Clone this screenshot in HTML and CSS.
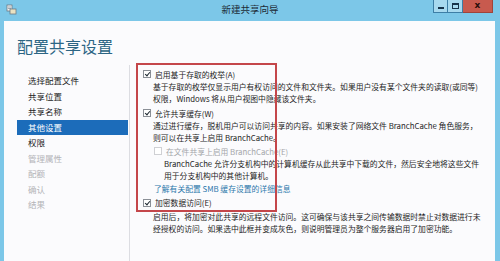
FILE: index.html
```html
<!DOCTYPE html>
<html lang="zh-CN">
<head>
<meta charset="utf-8">
<title>新建共享向导</title>
<link rel="stylesheet" href="styles.css">
</head>
<body>
<div class="window">
  <div class="titlebar">
    <div class="tb-left">
      <svg class="app-icon" width="11" height="11" viewBox="0 0 11 11">
        <rect x="1" y="1" width="5" height="6" fill="#f4f4f4" stroke="#6c7a86" stroke-width="0.8"/>
        <rect x="4" y="5" width="6" height="5" fill="#e9e2c2" stroke="#6c7a86" stroke-width="0.8"/>
        <path d="M2 3h3M2 4.5h3" stroke="#6c7a86" stroke-width="0.6"/>
      </svg>
    </div>
    <div class="title">新建共享向导</div>
    <div class="controls">
      <span class="btn min"><span class="glyph-min"></span></span>
      <span class="btn max"><span class="glyph-max"></span></span>
      <span class="btn close">x</span>
    </div>
  </div>
  <div class="client">
    <h1 class="heading">配置共享设置</h1>
    <div class="main">
      <ul class="nav">
        <li>选择配置文件</li>
        <li>共享位置</li>
        <li>共享名称</li>
        <li class="active">其他设置</li>
        <li>权限</li>
        <li class="disabled">管理属性</li>
        <li class="disabled">配额</li>
        <li class="disabled">确认</li>
        <li class="disabled">结果</li>
      </ul>
      <div class="panel">
        <div class="annot"></div>
        <div class="opt">
          <span class="cb checked"></span><span class="label">启用基于存取的枚举(A)</span>
        </div>
        <p class="desc">基于存取的枚举仅显示用户有权访问的文件和文件夹。如果用户没有某个文件夹的读取(或同等)<br>权限，Windows 将从用户视图中隐藏该文件夹。</p>
        <div class="opt sec">
          <span class="cb checked"></span><span class="label">允许共享缓存(W)</span>
        </div>
        <p class="desc">通过进行缓存，脱机用户可以访问共享的内容。如果安装了网络文件 BranchCache 角色服务，<br>则可以在共享上启用 BranchCache。</p>
        <div class="opt sub">
          <span class="cb dim"></span><span class="label dimtext">在文件共享上启用 BranchCache(E)</span>
        </div>
        <p class="desc subdesc">BranchCache 允许分支机构中的计算机缓存从此共享中下载的文件，然后安全地将这些文件<br>用于分支机构中的其他计算机。</p>
        <p class="link">了解有关配置 SMB 缓存设置的详细信息</p>
        <div class="opt sec">
          <span class="cb checked"></span><span class="label">加密数据访问(E)</span>
        </div>
        <p class="desc after">启用后，将加密对此共享的远程文件访问。这可确保与该共享之间传输数据时禁止对数据进行未<br>经授权的访问。如果选中此框并变成灰色，则说明管理员为整个服务器启用了加密功能。</p>
      </div>
    </div>
  </div>
</div>
</body>
</html>
```

FILE: styles.css
```css
* { box-sizing: border-box; }
html, body { margin: 0; padding: 0; }
body {
  width: 500px;
  height: 261px;
  overflow: hidden;
  font-family: "Noto Sans CJK SC", "Noto Sans", sans-serif;
  background: #7cc7e8;
}
.window {
  width: 500px;
  height: 261px;
  display: flex;
  flex-direction: column;
  background: #7cc7e8;
}
.titlebar {
  height: 21px;
  flex: none;
  display: grid;
  grid-template-columns: 1fr auto 1fr;
  align-items: start;
}
.tb-left { padding: 4px 0 0 6px; }
.app-icon { display: block; }
.title {
  font-size: 9.5px;
  line-height: 19px;
  color: #1d2b36;
}
.controls {
  justify-self: end;
  display: flex;
  margin-right: 7px;
}
.btn {
  height: 13px;
  display: flex;
  align-items: center;
  justify-content: center;
  border: 1px solid #3d7ea6;
  border-top: none;
}
.btn.min, .btn.max {
  width: 15px;
  background: #a7d9ef;
}
.btn.max { border-left: none; }
.btn.close {
  width: 30px;
  background: #c85a4e;
  border-color: #a0443b;
  border-left: none;
  color: #2a0e0b;
  font-family: "DejaVu Sans", sans-serif;
  font-weight: bold;
  font-size: 9px;
  line-height: 1;
  padding-bottom: 1px;
}
.glyph-min {
  width: 6px;
  height: 2px;
  background: #16324a;
  margin-top: 4px;
}
.glyph-max {
  width: 7px;
  height: 6px;
  border: 1px solid #16324a;
  border-top-width: 2px;
}
.client {
  flex: 1;
  margin: 0 5px 0 4px;
  background: #fbfbfd;
  display: flex;
  flex-direction: column;
  min-height: 0;
}
.heading {
  margin: 14px 0 0 13px;
  font-size: 16px;
  line-height: 22px;
  font-weight: normal;
  color: #2c6584;
}
.main {
  flex: 1;
  display: flex;
  margin-top: 8px;
  min-height: 0;
}
.nav {
  list-style: none;
  margin: 0 0 0 13px;
  padding: 8px 0 0 0;
  width: 113px;
  border-right: 1px solid #dcdde2;
  font-size: 8.5px;
  color: #222;
}
.nav li {
  width: 111px;
  height: 15.5px;
  line-height: 15.5px;
  padding-left: 11px;
}
.nav li.active {
  background: #1c6cba;
  color: #fff;
}
.nav li.disabled { color: #b4b4b8; }
.panel {
  position: relative;
  flex: 1;
  padding: 3px 0 0 13px;
  font-size: 7.8px;
  color: #1e1e1e;
}
.annot {
  position: absolute;
  left: 6px;
  top: -2px;
  width: 141px;
  height: 149px;
  border: 2px solid #c4464a;
}
.opt {
  display: flex;
  align-items: center;
  height: 12.5px;
}
.opt.sec { margin-top: 2px; }
.opt.sub { margin-left: 11px; margin-top: 1px; }
.cb {
  width: 8px;
  height: 8px;
  border: 1px solid #8a8f96;
  background: #fff;
  margin-right: 4px;
  position: relative;
  flex: none;
}
.cb.checked::after {
  content: "";
  position: absolute;
  left: 2px;
  top: 0px;
  width: 2px;
  height: 4px;
  border: solid #1f2a33;
  border-width: 0 1.3px 1.3px 0;
  transform: rotate(40deg);
}
.cb.dim { border-color: #cfd0d4; }
.dimtext { color: #a4a6aa; }
.desc {
  margin: 0.5px 0 0 10px;
  line-height: 12px;
  white-space: nowrap;
}
.desc.after { margin-top: 2px; }
.subdesc { margin-left: 21px; }
.link {
  margin: 0.5px 0 0 11px;
  line-height: 12px;
  color: #2b78ab;
}
```
